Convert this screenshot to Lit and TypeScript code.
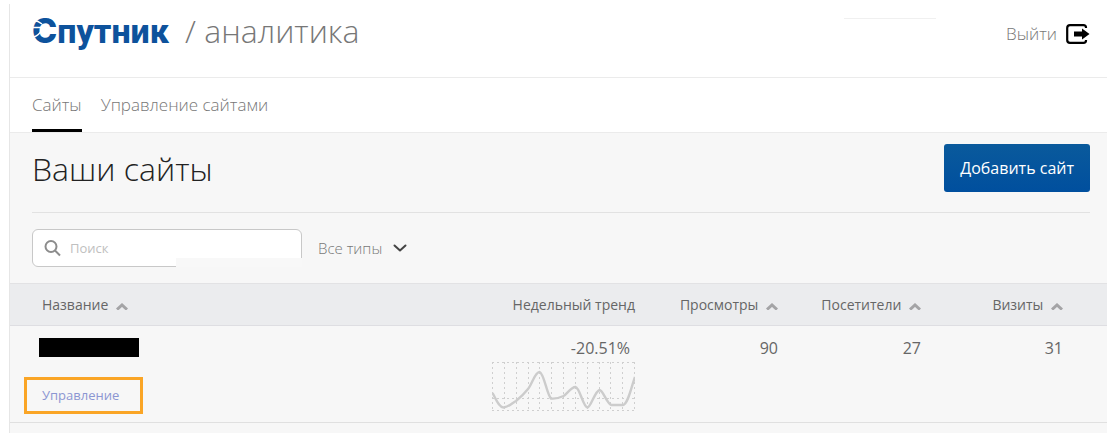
import { LitElement, html, css, svg } from "lit";
import { customElement, property } from "lit/decorators.js";

interface Site {
  trend: string;
  views: number;
  visitors: number;
  visits: number;
}

const SITES: Site[] = [{ trend: "-20.51%", views: 90, visitors: 27, visits: 31 }];

const COLUMNS = [
  { key: "name", title: "Название", sortable: true },
  { key: "trend", title: "Недельный тренд", sortable: false },
  { key: "views", title: "Просмотры", sortable: true },
  { key: "visitors", title: "Посетители", sortable: true },
  { key: "visits", title: "Визиты", sortable: true },
];

@customElement("trend-chart")
export class TrendChart extends LitElement {
  @property({ type: String }) label = "";

  static styles = css`
    :host {
      display: block;
    }
    .chart {
      display: block;
      width: 143px;
      height: 50px;
      margin-left: auto;
    }
    .grid {
      fill: none;
      stroke: #cfcfcf;
      stroke-width: 1;
      stroke-dasharray: 2 3;
    }
    .line {
      fill: none;
      stroke: #cccccc;
      stroke-width: 2.4;
      stroke-linejoin: round;
    }
  `;

  render() {
    const columns = Array.from({ length: 13 }, (_, i) => Math.round((i * 142) / 12) + 0.5);
    return html`
      <svg class="chart" viewBox="0 0 143 50" role="img" aria-label=${this.label}>
        ${columns.map((x) => svg`<path class="grid" d="M${x} 1V49" />`)}
        <path class="grid" d="M0 1.5H143M0 37.5H143M0 49.5H143" />
        <path
          class="line"
          d="M0.5 32C4 38 7 46.500 11.5 46.500C17 46 20 42 24 40C29 36 32 33 36 28C40 23 43 11 47.500 11C52 12 55 34 59 37.500C63 38 67 37 71.500 35C75 33 79 26 83.500 26C88 27 91 46 95.500 46.500C99 46 103 30 107.500 29C111 29 115 43 119.500 44H131C136 43 139 27 143 16"
        />
      </svg>
    `;
  }
}

@customElement("app-root")
export class AppRoot extends LitElement {
  static styles = css`
    :host {
      display: block;
      box-sizing: border-box;
      min-height: 100vh;
      padding: 4px 5px 0 9px;
      background: #ffffff;
      font-family: "Open Sans", "Noto Sans", sans-serif;
      font-size: 14px;
      color: #666666;
    }
    *,
    *::before,
    *::after {
      box-sizing: border-box;
    }
    .page {
      display: flex;
      flex-direction: column;
      min-height: calc(100vh - 4px);
      border-left: 1px solid #e6e6e6;
    }
    .header {
      position: relative;
      display: flex;
      align-items: center;
      justify-content: space-between;
      height: 74px;
      padding: 0 17px 14px 22px;
      border-bottom: 1px solid #ebebeb;
    }
    .header-mark {
      position: absolute;
      top: 14px;
      right: 171px;
      width: 92px;
      height: 1px;
      background: #f0f0f0;
    }
    .brand {
      display: flex;
      align-items: baseline;
      gap: 16px;
      padding-bottom: 6px;
      color: #777777;
      line-height: 48px;
      text-decoration: none;
    }
    .logo {
      position: relative;
      color: #0d529c;
      font-family: Roboto, "Open Sans", sans-serif;
      font-size: 34px;
      font-weight: 800;
    }
    .logo-initial {
      font-family: Inter, "Open Sans", sans-serif;
      font-size: 34px;
    }
    .logo-cuts {
      position: absolute;
      left: 0;
      top: 6px;
      width: 24px;
      height: 28px;
      fill: none;
      stroke: #ffffff;
      stroke-width: 1.5;
    }
    .product {
      font-size: 32px;
      font-weight: 300;
    }
    .logout {
      display: flex;
      align-items: center;
      gap: 9px;
      color: #777777;
      font-size: 17px;
      font-weight: 300;
      text-decoration: none;
    }
    .logout-icon {
      width: 24px;
      height: 20px;
    }
    .tabs {
      display: flex;
      gap: 19px;
      height: 55px;
      padding-left: 22px;
      border-bottom: 1px solid #ebebeb;
    }
    .tab {
      height: 54px;
      padding-top: 16px;
      color: #777777;
      font-size: 17px;
      font-weight: 300;
      line-height: 22px;
      text-decoration: none;
    }
    .tab-active {
      border-bottom: 3px solid #000000;
    }
    .content {
      flex: 1;
      background: #f7f7f7;
    }
    .title-bar {
      display: flex;
      align-items: flex-start;
      justify-content: space-between;
      height: 80px;
      margin: 0 17px 0 22px;
      padding-top: 11px;
      border-bottom: 1px solid #e2e2e2;
    }
    .title {
      margin: 0;
      color: #222222;
      font-size: 32px;
      font-weight: 300;
      line-height: 50px;
    }
    .add {
      height: 48px;
      padding: 0 16px;
      border: 0;
      border-radius: 3px;
      background: linear-gradient(#0a5a9c, #004f9e);
      color: #ffffff;
      font: 500 16px/20px "Open Sans", "Noto Sans", sans-serif;
    }
    .filters {
      display: flex;
      align-items: center;
      gap: 16px;
      padding: 16px 22px;
    }
    .search {
      position: relative;
      display: flex;
      align-items: center;
      gap: 9px;
      width: 270px;
      height: 38px;
      padding: 0 10px;
      border: 1px solid #c8c8c8;
      border-radius: 6px;
      background: #ffffff;
    }
    .search::after {
      content: "";
      position: absolute;
      right: -1px;
      bottom: -1px;
      width: 126px;
      height: 9px;
      background: #f8f8f8;
    }
    .search-icon {
      flex: none;
      width: 18px;
      height: 18px;
      fill: none;
      stroke: #8c8c8c;
      stroke-width: 2;
    }
    .search-input {
      flex: 1;
      min-width: 0;
      padding: 0;
      border: 0;
      outline: 0;
      background: none;
      color: #555555;
      font: 13px/20px "Open Sans", "Noto Sans", sans-serif;
    }
    .search-input::placeholder {
      color: #c0c0c0;
      opacity: 1;
    }
    .types {
      display: flex;
      align-items: center;
      gap: 10px;
    }
    .types-select {
      appearance: none;
      height: 26px;
      padding: 0;
      border: 0;
      background: none;
      color: #777777;
      font: 300 15px/22px "Open Sans", "Noto Sans", sans-serif;
    }
    .types-icon {
      width: 14px;
      height: 8px;
      fill: none;
      stroke: #444444;
      stroke-width: 2;
      stroke-linecap: round;
      stroke-linejoin: round;
    }
    .sites {
      width: 100%;
      table-layout: fixed;
      border-collapse: collapse;
    }
    .col-name {
      width: auto;
    }
    .col-trend {
      width: 160px;
    }
    .col-number {
      width: 143px;
    }
    .col-last {
      width: 186px;
    }
    .head-cell {
      height: 42px;
      padding: 0;
      border-top: 1px solid #e2e2e4;
      border-bottom: 1px solid #dedee2;
      background: #ebecee;
      font-weight: 400;
      line-height: 20px;
      text-align: right;
      white-space: nowrap;
    }
    .head-cell.name {
      padding-left: 32px;
      text-align: left;
    }
    .head-cell.visits,
    .cell.visits {
      padding-right: 44px;
    }
    .sort {
      padding: 0;
      border: 0;
      background: none;
      color: inherit;
      font: inherit;
    }
    .sort-icon {
      width: 12px;
      height: 7px;
      margin-left: 4px;
      fill: none;
      stroke: #a4a4a6;
      stroke-width: 3;
      vertical-align: baseline;
    }
    .cell {
      height: 97px;
      padding: 11px 0 0;
      border-bottom: 1px solid #e0e0e0;
      font-size: 16px;
      line-height: 22px;
      text-align: right;
      vertical-align: top;
    }
    .cell.name {
      padding-left: 14px;
      text-align: left;
    }
    .trend-value {
      padding-right: 5px;
      margin-bottom: 2px;
    }
    .redacted {
      width: 100px;
      height: 19px;
      margin: 1px 0 20px 15px;
      background: #000000;
    }
    .manage {
      display: inline-block;
      padding: 6px 21px 6px 15px;
      border: 3px solid #faa526;
      color: #8c96d2;
      font-size: 13px;
      line-height: 19px;
      text-decoration: none;
    }
  `;

  private renderHeading(column: (typeof COLUMNS)[number]) {
    return html`
      <th class="head-cell ${column.key}" scope="col">
        ${column.sortable
          ? html`<button class="sort" type="button">
              ${column.title}
              <svg class="sort-icon" viewBox="0 0 12 7" aria-hidden="true">
                <path d="M1 6.500L6 2L11 6.500" />
              </svg>
            </button>`
          : column.title}
      </th>
    `;
  }

  private renderSite(site: Site) {
    return html`
      <tr>
        <td class="cell name">
          <div class="redacted"></div>
          <a class="manage" href="#manage">Управление</a>
        </td>
        <td class="cell trend">
          <div class="trend-value">${site.trend}</div>
          <trend-chart label="Недельный тренд"></trend-chart>
        </td>
        <td class="cell views">${site.views}</td>
        <td class="cell visitors">${site.visitors}</td>
        <td class="cell visits">${site.visits}</td>
      </tr>
    `;
  }

  render() {
    return html`
      <div class="page">
        <header class="header">
          <a class="brand" href="#home">
            <span class="logo"
              ><span class="logo-initial">С</span>путник<svg
                class="logo-cuts"
                viewBox="0 0 24 28"
                aria-hidden="true"
              >
                <path d="M0 8Q5 7 10 11M0 14.500H10M2 24Q7 22 9 18" /></svg
            ></span>
            <span class="product">/ аналитика</span>
          </a>
          <span class="header-mark"></span>
          <a class="logout" href="#logout">
            Выйти
            <svg class="logout-icon" viewBox="0 0 24 20" aria-hidden="true">
              <path
                d="M20 4V3.500Q20 1.200 17.500 1.200H4Q1.200 1.200 1.200 4V16Q1.200 18.800 4 18.800H17.500Q20 18.800 20 16.500V16"
                fill="none"
                stroke="#000000"
                stroke-width="2.2"
              />
              <path d="M8 7.500H16V4.500L23.500 10L16 15.500V12.500H8Z" fill="#000000" />
            </svg>
          </a>
        </header>
        <nav class="tabs">
          <a class="tab tab-active" href="#sites" aria-current="page">Сайты</a>
          <a class="tab" href="#manage-sites">Управление сайтами</a>
        </nav>
        <main class="content">
          <div class="title-bar">
            <h1 class="title">Ваши сайты</h1>
            <button class="add" type="button">Добавить сайт</button>
          </div>
          <div class="filters">
            <div class="search">
              <svg class="search-icon" viewBox="0 0 18 18" aria-hidden="true">
                <circle cx="8" cy="7.500" r="5.500" />
                <path d="M12 11.500L17 16.500" />
              </svg>
              <input class="search-input" type="text" placeholder="Поиск" aria-label="Поиск" />
            </div>
            <div class="types">
              <select class="types-select" aria-label="Все типы">
                <option>Все типы</option>
              </select>
              <svg class="types-icon" viewBox="0 0 14 8" aria-hidden="true">
                <path d="M1.500 1.500L7 6.500L12.500 1.500" />
              </svg>
            </div>
          </div>
          <table class="sites">
            <colgroup>
              <col class="col-name" />
              <col class="col-trend" />
              <col class="col-number" />
              <col class="col-number" />
              <col class="col-last" />
            </colgroup>
            <thead>
              <tr>
                ${COLUMNS.map((column) => this.renderHeading(column))}
              </tr>
            </thead>
            <tbody>
              ${SITES.map((site) => this.renderSite(site))}
            </tbody>
          </table>
        </main>
      </div>
    `;
  }
}
